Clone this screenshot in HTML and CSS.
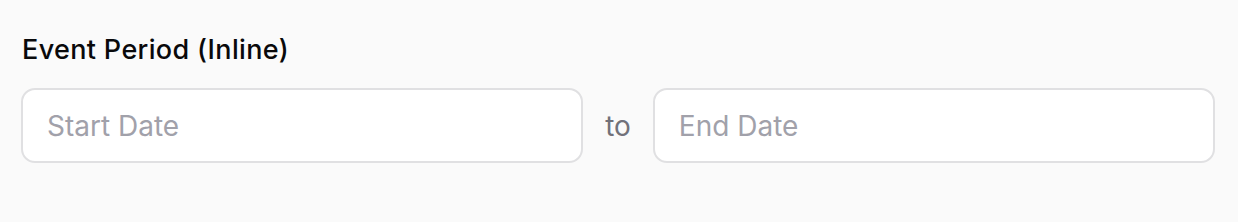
FILE: index.html
```html
<!DOCTYPE html>
<html>
<head>
<meta charset="utf-8">
<link rel="stylesheet" href="styles.css">
</head>
<body>
<div class="field">
  <label class="label">Event Period (Inline)</label>
  <div class="range">
    <input class="date-input" type="text" placeholder="Start Date">
    <span class="sep">to</span>
    <input class="date-input" type="text" placeholder="End Date">
  </div>
</div>
</body>
</html>
```
FILE: styles.css
```css
html, body {
  margin: 0;
  background: #fafafa;
  font-family: Inter, "Noto Sans", sans-serif;
}
.field {
  padding: 30px 23px 0 21px;
  display: flex;
  flex-direction: column;
  gap: 18px;
}
.label {
  font-size: 27px;
  line-height: 40px;
  font-weight: 500;
  letter-spacing: 0.35px;
  color: #09090b;
  padding-left: 1px;
}
.range {
  display: flex;
  align-items: center;
  gap: 22px;
}
.date-input {
  flex: 1;
  min-width: 0;
  height: 75px;
  box-sizing: border-box;
  border: 2px solid #e0e0e2;
  border-radius: 14px;
  background: #fff;
  padding: 0 24px;
  font-family: Inter, "Noto Sans", sans-serif;
  font-size: 28px;
  color: #09090b;
  outline: none;
}
.date-input::placeholder {
  color: #a1a1aa;
}
.sep {
  font-size: 28px;
  color: #71717a;
}
```
